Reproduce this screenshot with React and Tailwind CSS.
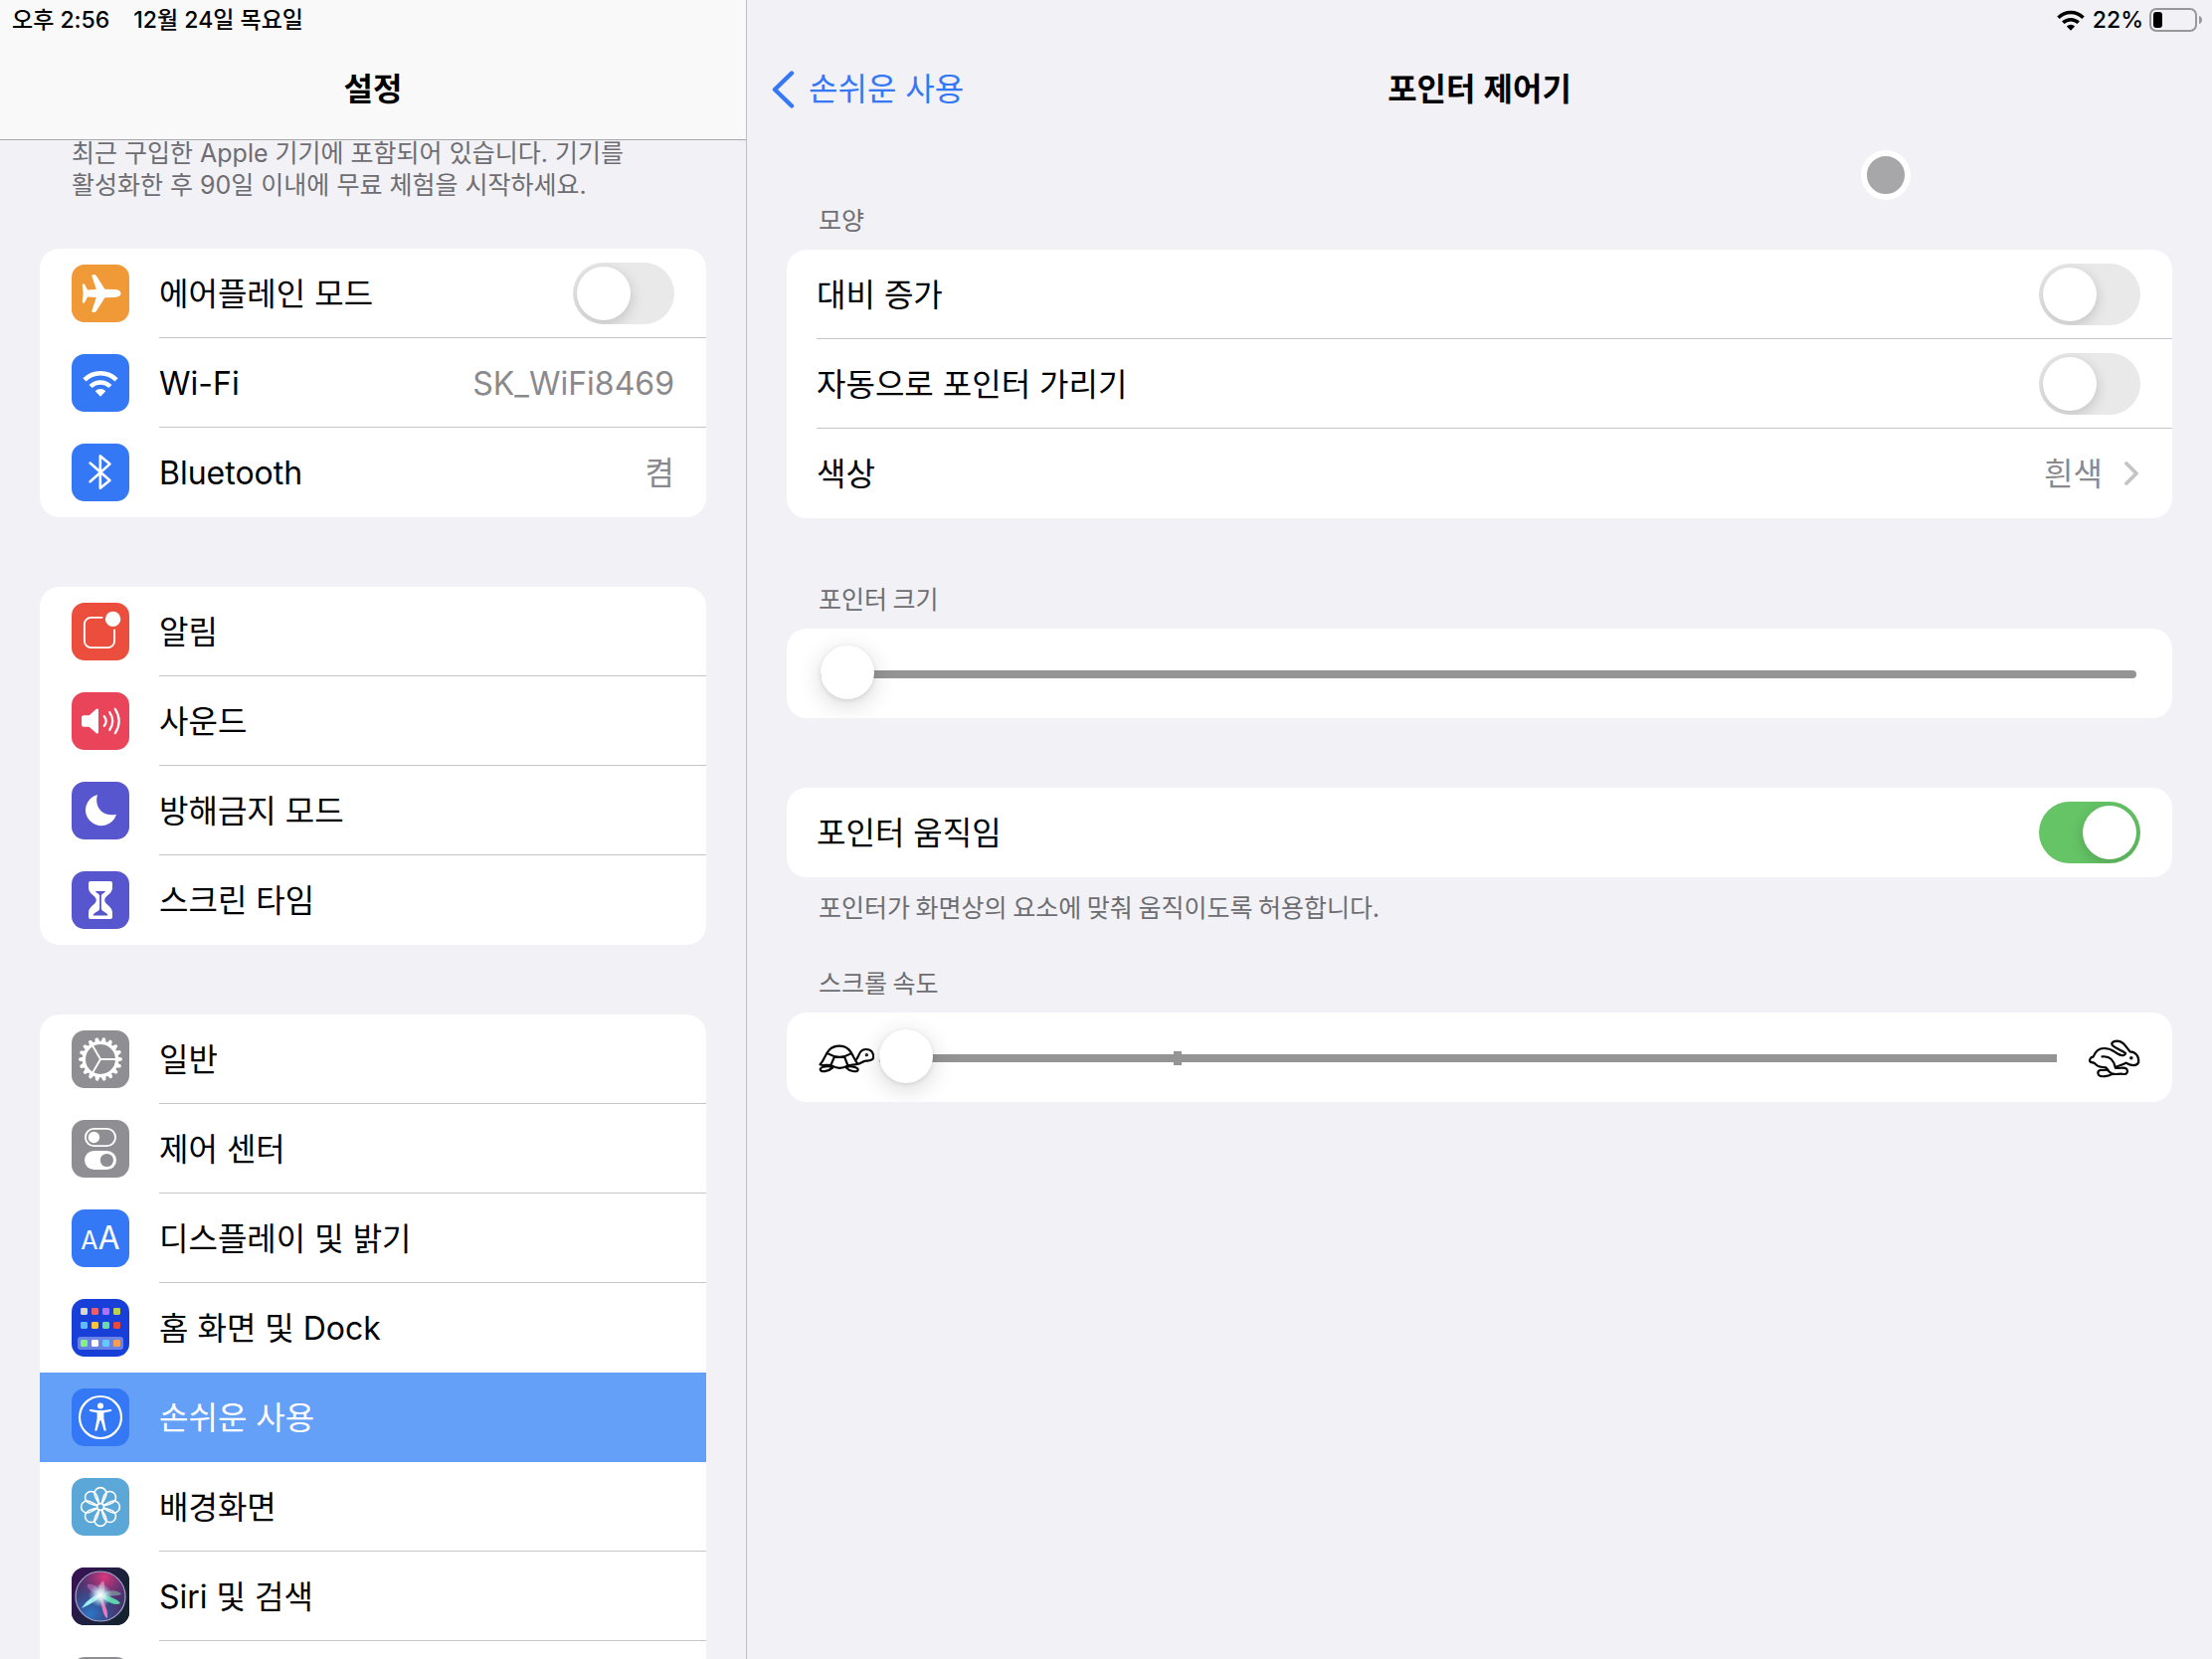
import { clsx } from 'clsx';

const gearTeeth = Array.from({ length: 18 }, (_, i) => i * 20);
const petals = [0, 45, 90, 135, 180, 225, 270, 315];

const homeApps = [
  { x: 9, y: 9, fill: '#d8d8cc' },
  { x: 20, y: 9, fill: '#ec5f6a' },
  { x: 31, y: 9, fill: '#b072f5' },
  { x: 42, y: 9, fill: '#bcd152' },
  { x: 9, y: 23, fill: '#5ebdf8' },
  { x: 20, y: 23, fill: '#f9c440' },
  { x: 31, y: 23, fill: '#70d7a8' },
  { x: 42, y: 23, fill: '#ea4a3b' },
  { x: 9, y: 41, fill: '#85f07e' },
  { x: 20, y: 41, fill: '#ffffff' },
  { x: 31, y: 41, fill: '#5fcbfa' },
  { x: 42, y: 41, fill: '#f3a055' },
];

function WifiShape() {
  return (
    <>
      <g fill="none" stroke="currentColor" strokeWidth="4.5">
        <path d="M12.9 25.9A22.8 22.8 0 0 1 45.1 25.9" />
        <path d="M19.1 32.5A14 14 0 0 1 38.9 32.5" />
      </g>
      <path d="M29 42.8L23.7 37.3A7.4 7.4 0 0 1 34.3 37.3Z" fill="currentColor" />
    </>
  );
}

const glyphs = {
  airplane: (
    <path
      fill="currentColor"
      d="M49.5 29C49.5 26.5 46.5 25.1 43 25.1L33.4 24.8L25 11.5Q24.2 10 22.3 10Q19.9 10 20.5 12L24.8 24.9L16 25.6L13.2 20Q12.6 19.1 11.6 19.4Q10.6 19.6 10.8 21L11.6 29L10.8 37Q10.6 38.4 11.6 38.6Q12.6 38.9 13.2 38L16 32.4L24.8 33.1L20.5 46Q19.9 48 22.3 48Q24.2 48 25 46.5L33.4 33.2L43 32.9C46.5 32.9 49.5 31.5 49.5 29Z"
    />
  ),
  wifi: <WifiShape />,
  bluetooth: (
    <path
      d="M18.6 19.6L38.4 37L28.8 44.8V12.4L38.4 20.6L18.6 38.2"
      fill="none"
      stroke="currentColor"
      strokeWidth="2.6"
      strokeLinejoin="round"
      strokeLinecap="round"
    />
  ),
  notifications: (
    <>
      <path
        d="M31.3 14.9H19.5A6.6 6.6 0 0 0 12.9 21.5V38.5A6.6 6.6 0 0 0 19.5 45.1H36.5A6.6 6.6 0 0 0 43.1 38.5V26.7"
        fill="none"
        stroke="currentColor"
        strokeWidth="1.9"
      />
      <circle cx="41.6" cy="16.4" r="7.7" fill="currentColor" />
    </>
  ),
  sound: (
    <>
      <path
        d="M12.6 23.2H17.6L24.6 17Q27 15.6 27 18V40Q27 42.4 24.6 41L17.6 34.8H12.6Q10 34.8 10 32.4V25.6Q10 23.2 12.6 23.2Z"
        fill="currentColor"
      />
      <g fill="none" stroke="currentColor" strokeWidth="2.2" strokeLinecap="round">
        <path d="M32.8 24.2Q36.6 29 32.8 33.8" />
        <path d="M38.2 20.2Q44.4 29 38.2 37.8" />
        <path d="M43.8 16.8Q51.6 29 43.8 41.2" />
      </g>
    </>
  ),
  moon: <path d="M26 13A15.8 15.8 0 1 0 45 32.7C32.5 36 22 26 26 13Z" fill="currentColor" />,
  hourglass: (
    <>
      <path
        d="M19 10H39Q41 10 41 12V16.5C41 23 33.2 24.5 33.2 29C33.2 33.5 41 35 41 41.5V46Q41 48 39 48H19Q17 48 17 46V41.5C17 35 24.8 33.5 24.8 29C24.8 24.5 17 23 17 16.5V12Q17 10 19 10Z"
        fill="currentColor"
      />
      <path
        d="M24 20H34C33.5 21.8 29.9 22.8 29.9 24.6V37.5C29.9 40.8 36.4 41 36.4 44.6H21.6C21.6 41 28.1 40.8 28.1 37.5V24.6C28.1 22.8 24.5 21.8 24 20Z"
        fill="#5856ce"
      />
    </>
  ),
  gear: (
    <>
      <circle cx="29" cy="29" r="16.6" fill="none" stroke="currentColor" strokeWidth="3.2" />
      {gearTeeth.map((angle) => (
        <path
          key={angle}
          d="M46.4 26.4L50.6 27.4Q51.2 29 50.6 30.2L46.4 31.6Z"
          fill="currentColor"
          transform={`rotate(${angle} 29 29)`}
        />
      ))}
      <path d="M29 29H45M29 29L21 15.2M29 29L21 42.8" stroke="currentColor" strokeWidth="1.9" />
    </>
  ),
  controls: (
    <>
      <rect x="13.9" y="8.9" width="30.2" height="17.2" rx="8.6" fill="none" stroke="currentColor" strokeWidth="1.9" />
      <circle cx="22.4" cy="17.5" r="5.7" fill="currentColor" />
      <rect x="13" y="31" width="32" height="19" rx="9.5" fill="currentColor" />
      <circle cx="35.4" cy="40.5" r="6.6" fill="#8e8e93" />
    </>
  ),
  home: (
    <>
      <rect x="6" y="38" width="46" height="13" rx="3" fill="#ffffff" opacity="0.35" />
      {homeApps.map((app) => (
        <rect key={`${app.x}-${app.y}`} x={app.x} y={app.y} width="7" height="7" rx="1.4" fill={app.fill} />
      ))}
    </>
  ),
  accessibility: (
    <>
      <circle cx="29" cy="29" r="21" fill="none" stroke="currentColor" strokeWidth="2.2" />
      <circle cx="29" cy="17.6" r="3" fill="currentColor" />
      <path
        d="M18.9 21L26 22.1H32L39.1 21Q40.2 21 40.2 22Q40.2 22.8 39.3 23L32.4 24.4V30L34.6 41.4Q34.7 42.5 33.8 42.7Q32.8 42.8 32.4 41.8L29.6 32.2H28.4L25.6 41.8Q25.2 42.8 24.2 42.7Q23.3 42.5 23.4 41.4L25.6 30V24.4L18.7 23Q17.8 22.8 17.8 22Q17.8 21 18.9 21Z"
        fill="currentColor"
      />
    </>
  ),
  flower: (
    <g fill="none" stroke="currentColor" strokeWidth="1.6">
      {petals.map((angle) => (
        <path
          key={angle}
          d="M27.6 26L24.6 20.6C23.6 18.8 23 17.4 23 15.6A6 6 0 0 1 35 15.6C35 17.4 34.4 18.8 33.4 20.6L30.4 26"
          transform={`rotate(${angle} 29 29)`}
        />
      ))}
      <circle cx="29" cy="29" r="3.3" />
    </g>
  ),
  siri: (
    <>
      <defs>
        <linearGradient id="siri-bg" x1="0" y1="0" x2="1" y2="0.6">
          <stop offset="0" stopColor="#3c1058" />
          <stop offset="0.6" stopColor="#1f2040" />
          <stop offset="1" stopColor="#15222f" />
        </linearGradient>
        <radialGradient id="siri-pink" cx="0.58" cy="0.12" r="0.55">
          <stop offset="0" stopColor="#e0387c" />
          <stop offset="1" stopColor="#8a2d78" stopOpacity="0" />
        </radialGradient>
        <radialGradient id="siri-blue" cx="0.3" cy="0.85" r="0.6">
          <stop offset="0" stopColor="#2a78c8" />
          <stop offset="1" stopColor="#2a60a8" stopOpacity="0" />
        </radialGradient>
        <radialGradient id="siri-glow">
          <stop offset="0" stopColor="#ffffff" />
          <stop offset="0.4" stopColor="#d8f6fa" stopOpacity="0.8" />
          <stop offset="1" stopColor="#8fd8e8" stopOpacity="0" />
        </radialGradient>
      </defs>
      <rect width="58" height="58" fill="url(#siri-bg)" />
      <circle cx="29" cy="29" r="25" fill="#47346e" />
      <circle cx="29" cy="29" r="25" fill="url(#siri-pink)" />
      <circle cx="29" cy="29" r="25" fill="url(#siri-blue)" />
      <path d="M29 28C20 25 14 20 16 17C23 16 28 21 29 28Z" fill="#b879c0" opacity="0.6" />
      <path d="M27 28C26 22 28 15 32 13.5C34 19 34 24 31 28Z" fill="#e59ac6" opacity="0.7" />
      <path d="M30 28C35 22 46 22 50 27C44 29 36 29 30 28Z" fill="#7fa3a8" opacity="0.7" />
      <path d="M29 27C36 28 47 32 49 36C43 39 34 34 29 28Z" fill="#5ee3b4" opacity="0.9" />
      <path d="M28 28C33 34 37 44 36 51C32 50 30 38 28 28Z" fill="#f07cba" opacity="0.95" />
      <path d="M10 41C15 33 22 28 31 26C28 32 20 36 10 41Z" fill="#a8f5f4" opacity="0.95" />
      <circle cx="29" cy="28" r="12" fill="url(#siri-glow)" />
      <circle cx="29" cy="29" r="25" fill="none" stroke="#a3a6cc" strokeWidth="1.2" />
    </>
  ),
};

const sidebarGroups = [
  {
    id: 'connectivity',
    rows: [
      { id: 'airplane', label: '에어플레인 모드', color: 'bg-[#f09a37]', toggle: true },
      { id: 'wifi', label: 'Wi-Fi', color: 'bg-[#3478f6]', value: 'SK_WiFi8469' },
      { id: 'bluetooth', label: 'Bluetooth', color: 'bg-[#3478f6]', value: '켬' },
    ],
  },
  {
    id: 'alerts',
    rows: [
      { id: 'notifications', label: '알림', color: 'bg-[#eb4e3d]' },
      { id: 'sound', label: '사운드', color: 'bg-[#ea445a]' },
      { id: 'moon', label: '방해금지 모드', color: 'bg-[#5856ce]' },
      { id: 'hourglass', label: '스크린 타임', color: 'bg-[#5856ce]' },
    ],
  },
  {
    id: 'device',
    rows: [
      { id: 'gear', label: '일반', color: 'bg-[#8e8e93]' },
      { id: 'controls', label: '제어 센터', color: 'bg-[#8e8e93]' },
      { id: 'display', label: '디스플레이 및 밝기', color: 'bg-[#3478f6]' },
      { id: 'home', label: '홈 화면 및 Dock', color: 'bg-[#183fd8]', noLine: true },
      { id: 'accessibility', label: '손쉬운 사용', color: 'bg-[#3478f6]', active: true },
      { id: 'flower', label: '배경화면', color: 'bg-[#5aa7d8]' },
      { id: 'siri', label: 'Siri 및 검색', color: 'bg-[#1f2040]', line: true },
    ],
    more: true,
  },
];

function AppIcon({ id, color }) {
  return (
    <span className={clsx('flex size-[58px] shrink-0 items-center justify-center overflow-hidden rounded-[13px] text-white', color)}>
      {id === 'display' ? (
        <span className="flex items-baseline leading-none" aria-hidden="true">
          <span className="text-[25px]">A</span>
          <span className="text-[32px]">A</span>
        </span>
      ) : (
        <svg viewBox="0 0 58 58" className="size-full" aria-hidden="true">
          {glyphs[id]}
        </svg>
      )}
    </span>
  );
}

function Toggle({ id, defaultChecked }) {
  return (
    <input
      id={id}
      type="checkbox"
      role="switch"
      defaultChecked={defaultChecked}
      className="relative h-[62px] w-[102px] shrink-0 appearance-none overflow-hidden rounded-full bg-[#e9e9e9] before:absolute before:top-1 before:left-1 before:size-[54px] before:rounded-full before:bg-white before:shadow-[0_4px_14px_rgba(0,0,0,0.18)] checked:bg-[#65c466] checked:before:left-11"
    />
  );
}

function SidebarRow({ row, last }) {
  const line = !row.active && !row.noLine && (!last || row.line);
  const inner = (
    <>
      <AppIcon id={row.id} color={row.color} />
      <span
        className={clsx(
          'flex h-full flex-1 items-center justify-between pr-8',
          line && 'shadow-[inset_0_-1px_0_#c6c6c8]'
        )}
      >
        <span className="pt-0.5">{row.label}</span>
        {row.value && <span className="pt-0.5 text-[#8a8a8e]">{row.value}</span>}
        {row.toggle && <Toggle id={row.id} />}
      </span>
    </>
  );
  const classes = clsx('flex h-[90px] items-center gap-[30px] pl-8', row.active && 'bg-[#649ff8] text-white');

  return (
    <li>
      {row.toggle ? (
        <label htmlFor={row.id} className={classes}>{inner}</label>
      ) : (
        <a href={`#${row.id}`} className={classes}>{inner}</a>
      )}
    </li>
  );
}

function Sidebar() {
  return (
    <aside className="relative w-[750px] shrink-0 overflow-hidden">
      <header className="absolute inset-x-0 top-0 z-10 flex h-[141px] flex-col border-b border-[#a8a8aa] bg-[#f9f9f9]">
        <div className="flex h-10 items-center gap-6 px-3 text-[23px] font-medium">
          <span>오후 2:56</span>
          <span>12월 24일 목요일</span>
        </div>
        <h1 className="flex h-[100px] items-center justify-center text-[32px] font-semibold">설정</h1>
      </header>

      <div className="flex flex-col px-10 pt-[138px]">
        <p className="px-8 text-[25px] leading-8 text-[#6d6d72]">
          최근 구입한 Apple 기기에 포함되어 있습니다. 기기를
          <br />
          활성화한 후 90일 이내에 무료 체험을 시작하세요.
        </p>
        <nav className="mt-12 flex flex-col gap-[70px]">
          {sidebarGroups.map((group) => (
            <ul key={group.id} className="overflow-hidden rounded-[20px] bg-white text-[32px]">
              {group.rows.map((row, i) => (
                <SidebarRow key={row.id} row={row} last={i === group.rows.length - 1} />
              ))}
              {group.more && (
                <li className="flex h-[90px] items-center pl-8">
                  <AppIcon color="bg-[#8e8e93]" />
                </li>
              )}
            </ul>
          ))}
        </nav>
      </div>
    </aside>
  );
}

function SettingRow({ id, label, checked, line }) {
  return (
    <label htmlFor={id} className="flex pl-[30px]">
      <span
        className={clsx(
          'flex h-[90px] flex-1 items-center justify-between pr-8',
          line && 'shadow-[inset_0_-1px_0_#c6c6c8]'
        )}
      >
        <span className="pt-0.5">{label}</span>
        <Toggle id={id} defaultChecked={checked} />
      </span>
    </label>
  );
}

function Slider({ id, rounded }) {
  return (
    <input
      id={id}
      type="range"
      min="0"
      max="100"
      defaultValue="0"
      className={clsx(
        'block h-[54px] w-full appearance-none bg-transparent [&::-webkit-slider-runnable-track]:h-2 [&::-webkit-slider-runnable-track]:bg-[#949494] [&::-webkit-slider-thumb]:-mt-[25px] [&::-webkit-slider-thumb]:size-[54px] [&::-webkit-slider-thumb]:appearance-none [&::-webkit-slider-thumb]:rounded-full [&::-webkit-slider-thumb]:bg-white [&::-webkit-slider-thumb]:shadow-[0_6px_24px_rgba(0,0,0,0.16),0_1px_4px_rgba(0,0,0,0.1)]',
        rounded && '[&::-webkit-slider-runnable-track]:rounded-full'
      )}
    />
  );
}

function Turtle() {
  return (
    <svg viewBox="23 43 171 87" className="h-[29px] w-[57px] shrink-0" fill="none" stroke="#000" strokeWidth="6.5" strokeLinecap="round" strokeLinejoin="round" aria-hidden="true">
      <path d="M28 103C44 90 44 48 86 48C120 48 124 78 139 99" />
      <path d="M28 104C38 110 52 101 64 108C78 116 96 116 110 108C118 103 128 106 139 103" />
      <path d="M53 72C74 84 98 84 119 72M71 80L60 106M101 80L111 106" />
      <path d="M134 91C146 86 142 58 166 58C184 58 190 70 188 84C186 92 176 92 166 93C154 94 152 102 139 103" />
      <path d="M62 111C54 108 28 110 28 119C28 128 52 126 66 113M108 112C116 107 144 112 142 120C140 128 116 125 106 113" />
      <circle cx="168" cy="75" r="1.6" fill="#000" />
    </svg>
  );
}

function Rabbit() {
  return (
    <svg viewBox="475 792 158 117" className="h-[39px] w-[53px] shrink-0" fill="none" stroke="#000" strokeWidth="6.5" strokeLinecap="round" strokeLinejoin="round" aria-hidden="true">
      <path d="M570 838C552 829 548 819 524 819C506 819 496 832 491 845C482 846 477 856 484 861C492 862 496 862 499 868C508 877 518 877 530 877C534 888 540 891 550 897" />
      <path d="M570 838C580 843 588 840 589 834C578 825 562 822 549 810C544 802 552 798 562 797C584 797 590 816 602 829C620 830 630 843 628 862C622 874 604 870 590 863C580 870 566 870 558 877C554 858 544 841 518 844" />
      <path d="M558 878C572 880 586 875 592 881C598 890 592 898 583 897C572 894 562 899 550 896C538 903 516 907 508 900C502 890 508 883 518 885L536 884" />
      <circle cx="606" cy="848" r="2" fill="#000" />
    </svg>
  );
}

function Main() {
  return (
    <main className="relative flex-1 border-l border-[#c0c0c4]">
      <div className="flex h-10 items-center justify-end pr-2.5 text-[23px] font-medium">
        <svg viewBox="11 16 36 27" className="mr-2 h-[21px] w-7" aria-hidden="true">
          <WifiShape />
        </svg>
        <span>22%</span>
        <svg viewBox="0 0 53 24" className="ml-1.5 h-6 w-[53px]" aria-hidden="true">
          <rect x="1" y="1" width="46" height="22" rx="6" fill="none" stroke="#98989b" strokeWidth="2" />
          <rect x="4" y="4" width="9" height="16" rx="3" fill="#000" />
          <path d="M50 8C54 9 54 15 50 16Z" fill="#98989b" />
        </svg>
      </div>

      <div className="grid h-[100px] grid-cols-[1fr_auto_1fr] items-center px-6 text-[32px]">
        <a href="#accessibility" className="flex items-center gap-3.5 text-[#3478f6]">
          <svg viewBox="0 0 24 38" className="h-[38px] w-6" aria-hidden="true">
            <path d="M21 2.5L4 19L21 35.5" fill="none" stroke="currentColor" strokeWidth="4.4" strokeLinecap="round" strokeLinejoin="round" />
          </svg>
          손쉬운 사용
        </a>
        <h2 className="font-semibold">포인터 제어기</h2>
      </div>

      <div className="px-10 pt-[62px] text-[32px]">
        <h3 className="mb-[13px] px-8 font-['Noto_Sans_CJK_KR',sans-serif] text-[25px] leading-9 text-[#6d6d72]">모양</h3>
        <section className="overflow-hidden rounded-[20px] bg-white">
          <SettingRow id="contrast" label="대비 증가" line />
          <SettingRow id="auto-hide" label="자동으로 포인터 가리기" line />
          <button type="button" className="flex h-[90px] w-full items-center pr-8 pl-[30px]">
            <span className="flex-1 pt-0.5 text-left">색상</span>
            <span className="pt-0.5 text-[#8a8a8e]">흰색</span>
            <svg viewBox="0 0 16 26" className="ml-[22px] h-[26px] w-4" aria-hidden="true">
              <path d="M2 3L12 13L2 23" fill="none" stroke="#c4c4c6" strokeWidth="3.8" strokeLinecap="round" strokeLinejoin="round" />
            </svg>
          </button>
        </section>

        <label
          htmlFor="pointer-size"
          className="mt-[62px] mb-[13px] block px-8 font-['Noto_Sans_CJK_KR',sans-serif] text-[25px] leading-9 text-[#6d6d72]"
        >
          포인터 크기
        </label>
        <section className="flex h-[90px] items-center overflow-hidden rounded-[20px] bg-white pt-0.5 pr-9 pl-[34px]">
          <Slider id="pointer-size" rounded />
        </section>

        <section className="mt-[70px] rounded-[20px] bg-white">
          <SettingRow id="motion" label="포인터 움직임" checked />
        </section>
        <p className="mt-[11px] px-8 font-['Noto_Sans_CJK_KR',sans-serif] text-[25px] leading-9 text-[#6d6d72]">
          포인터가 화면상의 요소에 맞춰 움직이도록 허용합니다.
        </p>

        <label
          htmlFor="scroll-speed"
          className="mt-10 mb-[13px] block px-8 font-['Noto_Sans_CJK_KR',sans-serif] text-[25px] leading-9 text-[#6d6d72]"
        >
          스크롤 속도
        </label>
        <section className="flex h-[90px] items-center overflow-hidden rounded-[20px] bg-white px-8 pt-0.5">
          <Turtle />
          <div className="relative mr-[31px] ml-1 flex-1">
            <span className="absolute top-1/2 left-1/4 h-3.5 w-2 -translate-y-1/2 bg-[#949494]" />
            <Slider id="scroll-speed" />
          </div>
          <Rabbit />
        </section>
      </div>

      {/* assistive pointer */}
      <span className="absolute top-[151px] right-[303px] size-[50px] rounded-full border-6 border-white bg-[#a7a7a9]" />
    </main>
  );
}

export default function App() {
  return (
    <div className="flex h-screen overflow-hidden bg-[#f1f1f6] font-['Inter','Noto_Sans_CJK_KR',sans-serif] text-black">
      <Sidebar />
      <Main />
    </div>
  );
}
